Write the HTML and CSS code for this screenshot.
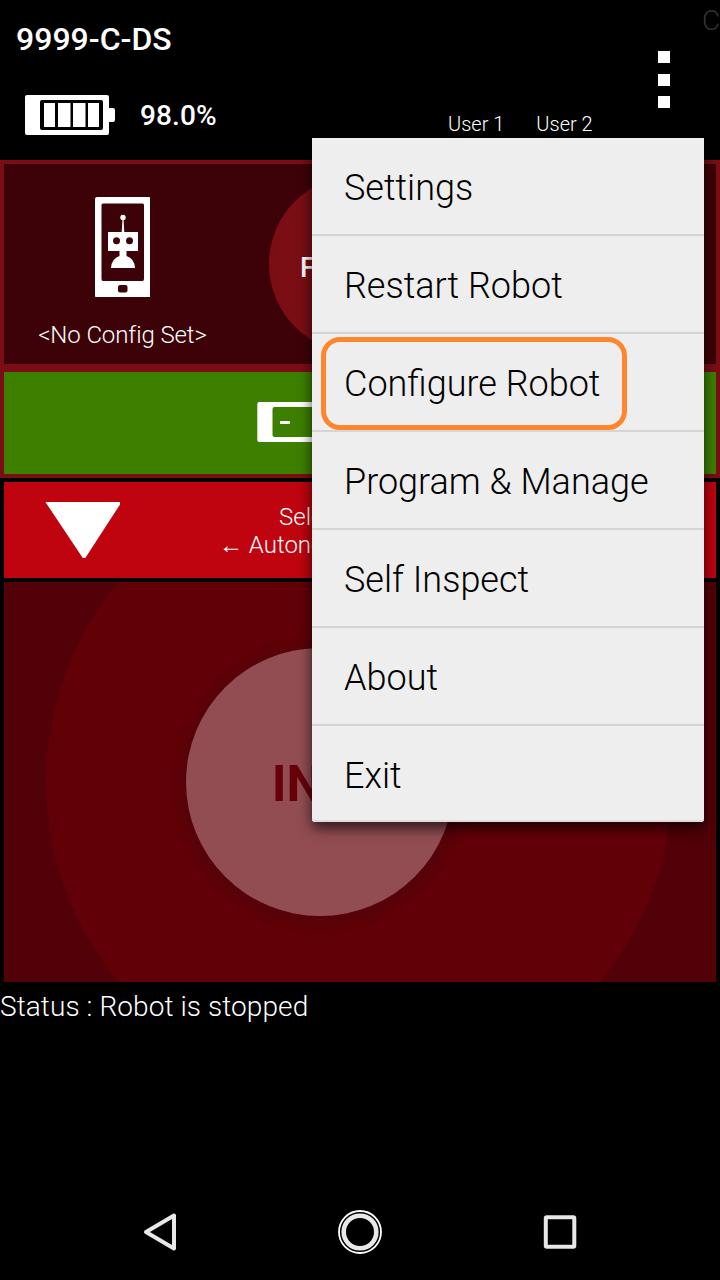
FILE: index.html
```html
<!DOCTYPE html>
<html lang="en">
<head>
<meta charset="utf-8">
<title>Driver Station</title>
<link rel="stylesheet" href="styles.css">
</head>
<body>
<div class="screen">
  <header class="header">
    <div class="identity">
      <div class="device-name">9999-C-DS</div>
      <div class="battery">
        <svg width="90" height="40" viewBox="0 0 90 40">
          <path fill="#fff" d="M2 0H82Q84 0 84 2V13H88Q90 13 90 15V25Q90 27 88 27H84V38Q84 40 82 40H2Q0 40 0 38V2Q0 0 2 0Z"/>
          <rect x="15" y="5" width="63" height="30" rx="2" fill="#000"/>
          <path fill="#fff" d="M19 8H30V32H19ZM33 8H45.500V32H33ZM48 8H60.500V32H48ZM63 8H74V32H63Z"/>
        </svg>
        <span class="battery-level">98.0%</span>
      </div>
    </div>
    <div class="users"><span>User 1</span><span>User 2</span></div>
    <div class="overflow-column">
      <span class="cut-label">C</span>
      <div class="overflow-button"><i></i><i></i><i></i></div>
    </div>
  </header>
  <section class="info-panel">
    <div class="config-row">
      <div class="config">
        <svg width="56" height="100" viewBox="0 0 56 100">
          <path fill="#fff" fill-rule="evenodd" d="M2 0H54Q55 0 55 1V100H1Q0 100 0 99V2Q0 0 2 0ZM8 6.500Q6.500 6.500 6.500 8V82Q6.500 84 8 84H47.500Q49 84 49 82V8Q49 6.500 47.500 6.500Z"/>
          <rect x="23" y="88" width="9.500" height="7.500" rx="2" fill="#3d0207"/>
          <circle cx="28" cy="20.500" r="2.700" fill="#fff"/>
          <path fill="#fff" d="M27.600 20H28.400L29.300 35H43V54H31.500V59Q39.500 61.500 40 71H16Q16.500 61.500 24.500 59V54H13V35H26.700Z"/>
          <circle cx="21.500" cy="43.700" r="3.500" fill="#3d0207"/><circle cx="34.500" cy="43.700" r="3.500" fill="#3d0207"/>
        </svg>
        <span class="config-name">&lt;No Config Set&gt;</span>
      </div>
      <div class="round-label">F</div>
    </div>
    <div class="robot-battery">
      <svg width="90" height="40" viewBox="0 0 90 40">
        <rect x=".3" width="84" height="40" rx="2" fill="#fff"/>
        <rect x="15.500" y="5" width="63" height="30" rx="2" fill="#3d8000"/>
        <rect x="23" y="19" width="10" height="3" fill="#fff"/>
      </svg>
    </div>
  </section>
  <section class="opmode-bar">
    <svg width="76" height="57" viewBox="0 0 76 57"><path fill="#fff" d="M.4 0H75V2.500L40.300 56H37.800Z"/></svg>
    <div class="opmode-text"><span class="select-label">Select Op Mode</span><span>← Autonomous</span></div>
  </section>
  <section class="run-area">
    <div class="outer-ring"><div class="init-button">INIT</div></div>
  </section>
  <div class="status">Status : Robot is stopped</div>
  <nav class="nav-bar">
    <svg width="40" height="44" viewBox="0 0 40 44"><path d="M34 5.500V38.500L6 22Z" fill="none" stroke="#e8e8e8" stroke-width="4" stroke-linejoin="round"/></svg>
    <svg width="44" height="44" viewBox="0 0 44 44" fill="none"><circle cx="22" cy="22" r="21" stroke="#fff" stroke-width="1.800"/><circle cx="22" cy="22" r="16.300" stroke="#e8e8e8" stroke-width="4.600"/></svg>
    <svg width="40" height="44" viewBox="0 0 40 44"><rect x="5.800" y="7.300" width="28.500" height="29.500" rx="1" fill="none" stroke="#e8e8e8" stroke-width="4"/></svg>
  </nav>
  <div class="menu">
    <div class="menu-item"><span>Settings</span></div>
    <div class="menu-item"><span>Restart Robot</span></div>
    <div class="menu-item"><span>Configure Robot</span><b class="highlight"></b></div>
    <div class="menu-item"><span>Program &amp; Manage</span></div>
    <div class="menu-item"><span>Self Inspect</span></div>
    <div class="menu-item"><span>About</span></div>
    <div class="menu-item"><span>Exit</span></div>
  </div>
</div>
</body>
</html>
```
FILE: styles.css
```css
* { box-sizing: border-box; }
body { margin: 0; background: #000; }
svg { display: block; flex: none; }
.screen {
  position: relative;
  width: 720px;
  height: 1280px;
  overflow: hidden;
  background: #000;
  color: #fff;
  font-family: Roboto, "Liberation Sans", sans-serif;
  font-weight: 300;
  display: flex;
  flex-direction: column;
}
.header { display: flex; height: 160px; flex: none; }
.identity { width: 448px; padding-top: 19px; }
.device-name { padding-left: 16px; font-size: 32px; line-height: 40px; font-weight: 500; }
.battery { display: flex; align-items: center; gap: 25px; height: 40px; margin-top: 36px; padding-left: 25px; }
.battery-level { padding-top: 2px; font-size: 28px; line-height: 40px; font-weight: 500; letter-spacing: .1px; }
.users { display: flex; gap: 32px; width: 210px; padding-top: 112px; font-size: 20px; line-height: 24px; white-space: nowrap; }
.overflow-column { width: 62px; overflow: hidden; }
.cut-label { display: block; padding: 4px 0 0 44px; font-size: 28px; line-height: 34px; color: #333; }
.overflow-button { display: flex; flex-direction: column; gap: 10.500px; padding: 13px 0 0; }
.overflow-button i { width: 12px; height: 12px; background: #fff; }
.info-panel {
  flex: none;
  height: 318px;
  border: 4px solid #7a0e14;
  background: #7a0e14;
  display: flex;
  flex-direction: column;
  gap: 8px;
}
.config-row { display: flex; align-items: center; height: 200px; background: #3d0207; }
.config { width: 265px; height: 200px; display: flex; flex-direction: column; align-items: center; padding: 33px 28px 0 0; }
.config-name { margin-top: 23px; font-size: 24px; line-height: 30px; letter-spacing: -.1px; }
.round-label {
  width: 178px;
  height: 178px;
  border-radius: 50%;
  background: #7a0e14;
  padding: 4px 0 0 31px;
  font-size: 28px;
  font-weight: 500;
  line-height: 178px;
}
.robot-battery { height: 102px; background: #3d8000; padding: 30px 0 0 253px; }
.opmode-bar { flex: none; display: flex; height: 96px; margin: 4px 4px 0; padding: 20px 0 0 41px; background: #bf040f; }
.opmode-text { display: flex; flex-direction: column; margin: 1px 0 0 98px; font-size: 24px; line-height: 28px; white-space: nowrap; }
.select-label { padding-left: 60px; }
.run-area { flex: none; height: 400px; margin: 4px 4px 0; background: #510107; overflow: hidden; }
.outer-ring { width: 626px; height: 626px; margin: -113px 0 0 42px; padding: 179px 0 0 140px; border-radius: 50%; background: #620007; }
.init-button {
  width: 268px;
  height: 268px;
  border-radius: 50%;
  background: #924d52;
  box-shadow: 0 2px 9px 9px rgba(75, 6, 12, .5);
  color: #68000a;
  font-size: 50.500px;
  font-weight: 700;
  line-height: 272px;
  text-align: center;
  text-indent: -1px;
}
.status { height: 50px; flex: none; font-size: 28px; line-height: 50px; letter-spacing: .08px; }
.nav-bar { display: flex; justify-content: space-between; align-items: center; margin: 178px 140px 0; height: 44px; }
/* Overflow menu, drawn above the rest of the screen */
.menu {
  position: absolute;
  left: 312px;
  top: 138px;
  width: 392px;
  background: #eee;
  color: #000;
  border-radius: 0 0 3px 3px;
  box-shadow: 0 6px 14px rgba(0, 0, 0, .7), inset 0 -2px 0 #ddd;
}
.menu-item { position: relative; height: 98px; padding: 2px 32px 0; border-bottom: 2px solid #d5d5d5; font-size: 36px; line-height: 97px; }
.menu-item:last-child { height: 96px; border: 0; }
.highlight { position: absolute; left: 9px; top: 3px; width: 306px; height: 93px; border: 5px solid #ff862f; border-radius: 19px; }
```
